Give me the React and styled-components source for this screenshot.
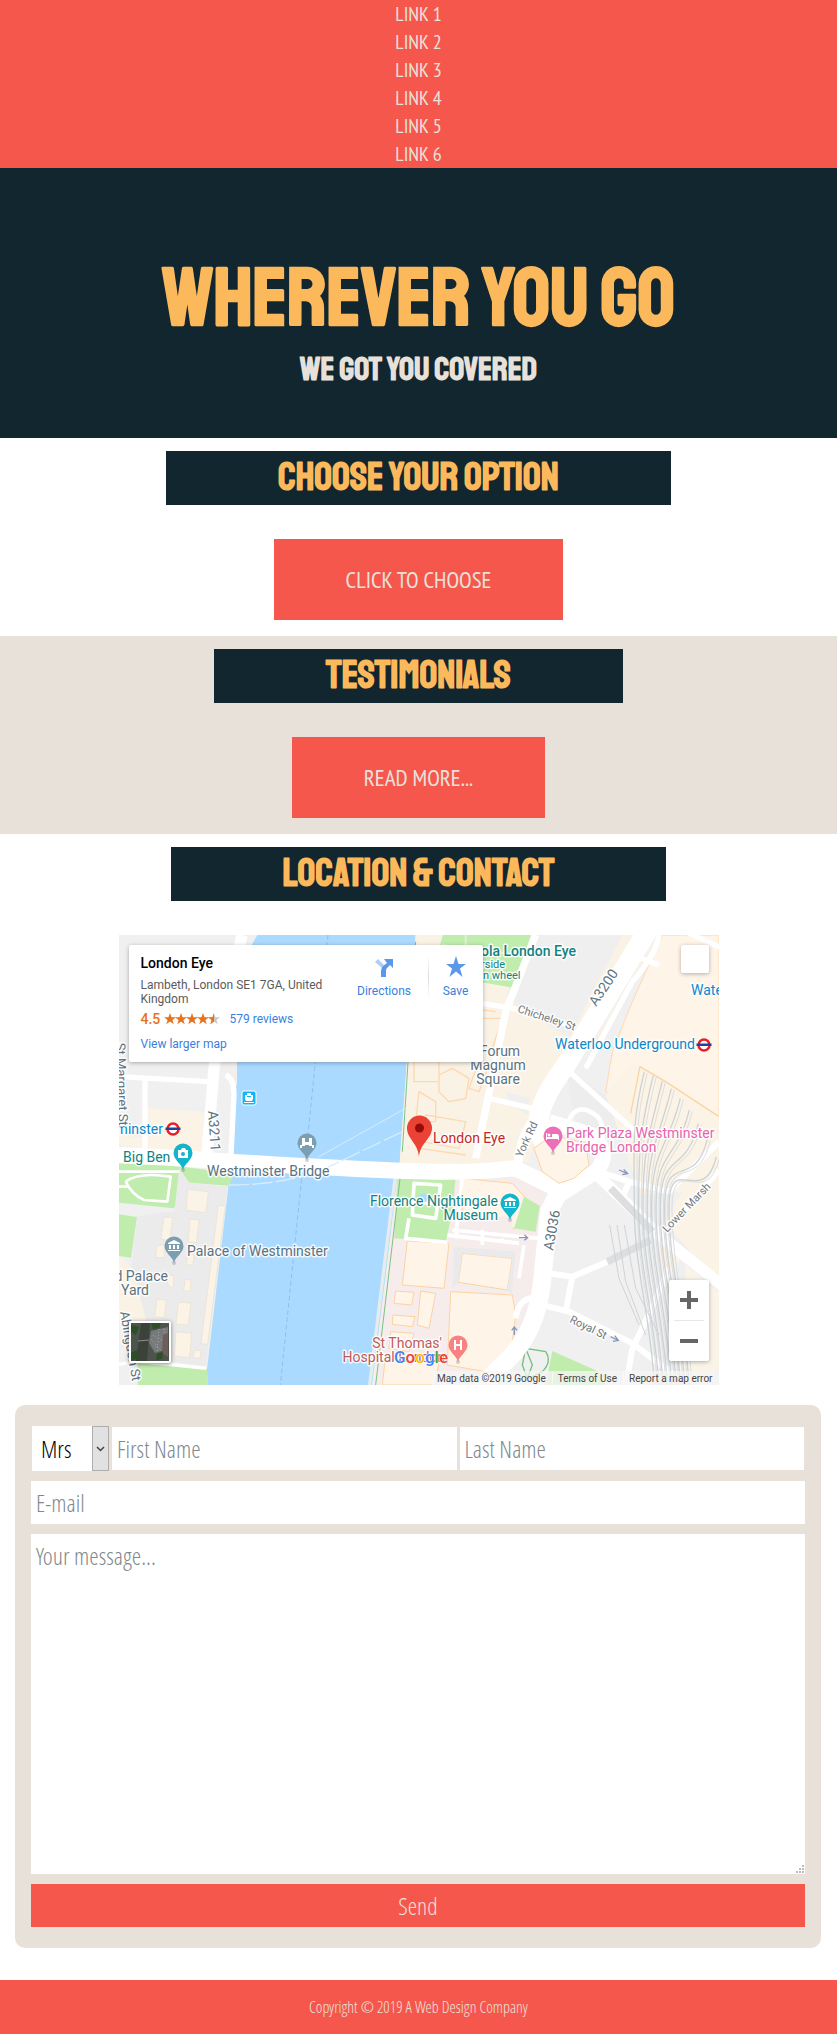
import React from "react";
import styled, { createGlobalStyle } from "styled-components";

const coral = "#f6574d";
const navy = "#122630";
const gold = "#fcb95b";
const sand = "#e8e1da";
const display = 'Staatliches, "Bebas Neue", "Oswald", sans-serif';
const accent = '"Ubuntu Condensed", "PT Sans Narrow", "Open Sans Condensed", sans-serif';
const body = '"Open Sans Condensed Light", "Open Sans Condensed", "Open Sans", sans-serif';
const mapFont = 'Roboto, "Liberation Sans", sans-serif';

const GlobalStyle = createGlobalStyle`
  *, *::before, *::after { box-sizing: border-box; }
  body { margin: 0 1px 0 0; background: #fff; font-family: ${body}; font-weight: 300; }
`;

/* ---------- page ---------- */

const Nav = styled.nav`
  background: ${coral};
`;

const NavList = styled.ul`
  margin: 0;
  padding: 0;
  list-style: none;
  text-align: center;
`;

const NavItem = styled.li`
  font-family: ${accent};
  font-size: 20px;
  font-weight: 400;
  line-height: 28px;
`;

const NavLink = styled.a`
  color: ${sand};
  text-decoration: none;
  text-transform: uppercase;
`;

const Hero = styled.header`
  display: flex;
  flex-direction: column;
  align-items: center;
  padding: 85px 16px 43px;
  background: ${navy};
  font-family: ${display};
  font-weight: 700;
  text-align: center;
`;

const HeroTitle = styled.h1`
  margin: 0;
  color: ${gold};
  font-size: 82px;
  line-height: 92px;
`;

const HeroTagline = styled.h2`
  margin: 0;
  color: ${sand};
  font-size: 33px;
  line-height: 50px;
`;

const Section = styled.section`
  display: flex;
  flex-direction: column;
  align-items: center;
  gap: 34px;
  padding: 13px 0 16px;
  background: ${(p) => (p.$tinted ? sand : "#fff")};
`;

const SectionTitle = styled.h2`
  margin: 0;
  padding: 3px 112px;
  background: ${navy};
  color: ${gold};
  font-family: ${display};
  font-size: 39px;
  font-weight: 700;
  line-height: 48px;
`;

const ActionButton = styled.button`
  padding: 24px 72px;
  border: 0;
  background: ${coral};
  color: ${sand};
  font-family: ${accent};
  font-size: 23px;
  font-weight: 400;
  line-height: 33px;
  text-transform: uppercase;
  cursor: pointer;
`;

const Footer = styled.footer`
  padding: 16px;
  background: ${coral};
  color: ${sand};
  font-size: 16px;
  line-height: 22px;
  text-align: center;
`;

/* ---------- form ---------- */

const ContactForm = styled.form`
  display: flex;
  flex-direction: column;
  gap: 10px;
  margin: 4px 16px 32px 15px;
  padding: 21px 16px;
  border-radius: 10px;
  background: ${sand};
`;

const NameRow = styled.div`
  display: flex;
  align-items: center;
  gap: 3px;
  padding: 0 1px;
`;

const TitlePicker = styled.div`
  position: relative;
  flex: none;
  width: 77px;
`;

const TitleSelect = styled.select`
  appearance: none;
  display: block;
  width: 100%;
  height: 45px;
  padding: 0 9px;
  border: 0;
  border-radius: 0;
  background: #fff;
  color: #000;
  font: 300 24px/33px ${body};
`;

const PickerArrow = styled.span`
  position: absolute;
  inset: 0 0 0 auto;
  display: grid;
  place-items: center;
  width: 17px;
  border: 1px solid #adadad;
  background: #e1e1e1;
  pointer-events: none;
`;

const Field = styled.input`
  flex: 1 1 0;
  min-width: 0;
  width: 100%;
  padding: 5px;
  border: 0;
  border-radius: 0;
  background: #fff;
  color: ${navy};
  font: 300 24px/33px ${body};
  &::placeholder { color: #7f898e; opacity: 1; }
`;

const MessageBox = styled.div`
  position: relative;
  display: flex;
`;

const Message = styled.textarea`
  width: 100%;
  height: 340px;
  padding: 5px;
  border: 0;
  resize: none;
  background: #fff;
  color: ${navy};
  font: 300 24px/33px ${body};
  &::placeholder { color: #7f898e; opacity: 1; }
`;

const Grip = styled.svg`
  position: absolute;
  right: 1px;
  bottom: 1px;
`;

const SendButton = styled.button`
  padding: 5px;
  border: 0;
  background: ${coral};
  color: ${sand};
  font: 300 24px/33px ${body};
  cursor: pointer;
`;

/* ---------- map ---------- */

const MapFrame = styled.div`
  position: relative;
  width: 600px;
  max-width: 100%;
  height: 450px;
  overflow: hidden;
  background: #f0f0f0;
  font-family: ${mapFont};
  font-weight: 400;
`;

const MapCanvas = styled.svg`
  display: block;
`;

const MapLabel = styled.text`
  fill: ${(p) => p.$color || "#5b7280"};
  stroke: #fff;
  stroke-opacity: 0.85;
  stroke-width: 3px;
  stroke-linejoin: round;
  paint-order: stroke;
  font-family: ${mapFont};
  font-size: ${(p) => p.$size || 14}px;
  font-weight: ${(p) => p.$weight || 400};
  text-anchor: ${(p) => p.$anchor || "start"};
`;

const LogoText = styled.text`
  font-family: ${mapFont};
  font-size: 17px;
  font-weight: 500;
  stroke: #fff;
  stroke-width: 1px;
  paint-order: stroke;
`;

const PlaceCard = styled.div`
  position: absolute;
  top: 10px;
  left: 10px;
  display: flex;
  width: 354px;
  height: 117px;
  padding: 10px 0 0 12px;
  border-radius: 2px;
  background: #fff;
  box-shadow: 0 1px 4px rgba(0, 0, 0, 0.3);
`;

const PlaceInfo = styled.div`
  width: 200px;
  color: #5b5b5b;
  font-size: 12px;
  line-height: 14px;
`;

const PlaceName = styled.div`
  margin-bottom: 7px;
  color: #000;
  font-size: 14px;
  font-weight: 500;
  line-height: 16px;
`;

const RatingRow = styled.div`
  display: flex;
  align-items: center;
  height: 16px;
  margin: 5px 0 10px;
`;

const Score = styled.span`
  width: 23px;
  color: #e7711b;
  font-size: 14px;
  font-weight: 500;
`;

const MapLink = styled.a`
  color: #3a7fe0;
  font-size: 12px;
  text-decoration: none;
`;

const ReviewsLink = styled(MapLink)`
  margin-left: 10px;
`;

const CardAction = styled.a`
  display: flex;
  flex-direction: column;
  align-items: center;
  gap: 7px;
  width: ${(p) => p.$width}px;
  height: 44px;
  padding-top: ${(p) => p.$drop || 0}px;
  color: #3a7fe0;
  font-size: 12px;
  line-height: 14px;
  text-decoration: none;
`;

const CardDivider = styled.span`
  width: 1px;
  height: 44px;
  background: linear-gradient(#fff, #dcdcdc, #fff);
`;

const FullscreenButton = styled.button`
  position: absolute;
  top: 10px;
  right: 10px;
  width: 28px;
  height: 28px;
  border: 0;
  border-radius: 2px;
  background: #fff;
  box-shadow: 0 1px 4px rgba(0, 0, 0, 0.3);
`;

const ZoomControl = styled.div`
  position: absolute;
  right: 10px;
  bottom: 24px;
  display: flex;
  flex-direction: column;
  width: 40px;
  padding: 0 5px;
  border-radius: 2px;
  background: #fff;
  box-shadow: 0 1px 4px rgba(0, 0, 0, 0.3);
`;

const ZoomButton = styled.button`
  display: grid;
  place-items: center;
  height: 40px;
  padding: 0;
  border: 0;
  background: none;
  & + & { height: 41px; border-top: 1px solid #e6e6e6; }
`;

const SatelliteButton = styled.button`
  position: absolute;
  left: 10px;
  bottom: 22px;
  width: 42px;
  height: 42px;
  padding: 0;
  border: 2px solid #fff;
  border-radius: 2px;
  background: #3d463e;
  box-shadow: 0 1px 4px rgba(0, 0, 0, 0.5);
`;

const Legal = styled.div`
  position: absolute;
  right: 0;
  bottom: 0;
  display: flex;
  height: 14px;
  background: rgba(245, 245, 245, 0.75);
  color: #444;
  font-size: 10px;
  line-height: 15px;
`;

const LegalItem = styled.span`
  padding: 0 6px 0 5px;
  & + & { border-left: 1px solid rgba(255, 255, 255, 0.6); }
`;

const STAR = "M6 0 7.5 4.2H12L8.4 6.9 9.7 11.2 6 8.6 2.3 11.2 3.6 6.9 0 4.2H4.5Z";

function Stars() {
  return (
    <svg width="56" height="12" viewBox="0 0 56 12" aria-hidden="true">
      <defs>
        <clipPath id="half-star"><rect width="6" height="12" /></clipPath>
      </defs>
      {[0, 11, 22, 33].map((x) => (
        <path key={x} d={STAR} fill="#e7711b" transform={`translate(${x} 0)`} />
      ))}
      <g transform="translate(44 0)">
        <path d={STAR} fill="#c8c8c8" />
        <path d={STAR} fill="#e7711b" clipPath="url(#half-star)" />
      </g>
    </svg>
  );
}

function Pin({ x, y, color, children }) {
  return (
    <g transform={`translate(${x} ${y})`}>
      <path d="M0 16C-1 10-9.500 6-9.500-1A9.500 9.500 0 0 1 9.500-1C9.500 6 1 10 0 16Z" fill={color} />
      <circle cx="0" cy="16" r="2" fill="#555" opacity=".25" />
      <g fill="#fff">{children}</g>
    </g>
  );
}

function Roundel({ x, y }) {
  return (
    <g transform={`translate(${x} ${y})`}>
      <circle r="5.500" fill="#fff" stroke="#e3202b" strokeWidth="2.500" />
      <rect x="-7.500" y="-1.500" width="15" height="2.500" fill="#273f94" />
    </g>
  );
}

const museum = <path d="M0-7-6-4V-3H6V-4ZM-5-2H-3V2H-5ZM-1-2H1V2H-1ZM3-2H5V2H3ZM-6 3H6V4H-6Z" />;

/* rail tracks fanning south from the station */
const tracks = Array.from({ length: 9 }, (_, i) => {
  const top = 1576 + i * 27;
  const y = 410 + i * i * 3 + i * 8;
  const mid = 1546 + i * 13;
  return `M${top} ${y}C${top - 40} ${y + 160} ${mid} 640 ${mid} 820S${mid + 50} 1150 ${mid + 60} 1350`;
}).join("");

function CityMap() {
  return (
    <MapCanvas width="600" height="450" viewBox="0 0 600 450" role="img" aria-label="Map around the London Eye">
      <g transform="scale(.33333)">
        <rect width="1800" height="1350" fill="#f0f0f0" />
        {/* river */}
        <path d="M415 0 398 30 354 381V450L338 458 344 660 330 740 264 1303 266 1350H759L842 680 858 460 890 0Z" fill="#aadaff" />
        <path d="M830 715 752 1350" stroke="#e6eceb" strokeWidth="10" fill="none" />
        {/* east bank blocks */}
        <path d="M890 0H1560L1390 330 1268 520 1230 680 842 690 858 460Z" fill="#faf3e5" />
        <path d="M1215 0H1510L1350 310 1160 190Z" fill="#efefef" />
        <path d="M1160 470 1235 490 1225 540 1170 500Z" fill="#efefef" />
        <path d="M1350 360 1460 470 1540 560V680L1280 600 1250 560Z" fill="#f0f0f0" />
        <path d="M1340 400 1460 480 1520 560 1440 620 1370 570Z" fill="#ededee" />
        <path d="M1560 0H1640L1540 140 1440 330 1380 300Z" fill="#f6f2ea" />
        <path d="M1630 0H1800V620L1540 500 1460 470 1480 350 1540 200Z" fill="#fff4e8" stroke="#fcd9b3" strokeWidth="3" />
        <path d="M1460 480 1540 380 1800 540V1350H1740L1610 900Z" fill="#fbf4e6" />
        <path d="M1535 535 1563 395 1640 440 1800 545" fill="none" stroke="#fcd3a3" strokeWidth="4" />
        <path d="M1690 770 1560 780 1340 765 1290 830 1280 1080 1040 1350H1740L1560 1000Z" fill="#f0f0f1" />
        <path d="M1640 860 1800 1060V1350H1660L1590 1110Z" fill="#efeff0" />
        <path d="M1600 860 1640 900 1690 960 1640 1060Z" fill="#fbf4e6" />
        <path d="M1700 990 1800 1070V1300L1760 1350H1680Z" fill="#faf4e8" />
        {/* south bank hospital */}
        <path d="M836 710H1260L1290 830 1250 1110 1080 1350H765Z" fill="#f5eceb" />
        <g fill="#fff4e8" stroke="#fcd3a3" strokeWidth="3">
          <path d="M865 918 990 925 975 1060 850 1050ZM1030 955 1180 970 1165 1065 1018 1042ZM995 1070 1180 1080 1190 1140 1180 1220 1100 1310 985 1290ZM830 1068 885 1072 878 1110 825 1105ZM822 1140 888 1145 880 1175 820 1168ZM815 1190 885 1195 870 1250 810 1240ZM800 1260 960 1275 950 1350H790ZM905 1068 950 1075 930 1180 895 1170Z" />
          <path d="M1030 730 1180 745 1230 800 1190 880 1030 865Z" />
          <path d="M985 845H1180V882L985 870Z" fill="#f5eceb" stroke="none" />
          <path d="M985 900 1200 925" stroke="#fff" strokeWidth="12" />
        </g>
        <path d="M1005 935 1190 950 1178 1080 1165 1065 1180 970 1030 955 1018 1042 1000 1060Z" fill="#eaeaec" />
        {/* buildings north of the wheel */}
        <g fill="none" stroke="#fdd8b0" strokeWidth="4">
          <path d="M885 380H960V440H885ZM900 470 950 500V560H890ZM1060 250 1150 250 1120 340 1060 330ZM1075 390 1110 390 1080 470 1050 460ZM960 420 1000 400 1050 430 1040 490 990 500 960 470ZM920 540 1040 560 1020 640 910 620Z" />
          <path d="M1060 220 1130 230M900 640 1040 660" />
        </g>
        {/* parks */}
        <g fill="#c0ecae">
          <path d="M971 0H1236L1181 158 1080 140 940 120Z" />
          <path d="M0 672 346 715 330 752 211 743 165 820 0 803Z" />
          <path d="M0 838 54 846 36 968 0 963ZM56 1285 264 1303 266 1350H56Z" />
          <path d="M836 715 1010 727 1000 830 980 920 826 910ZM1215 785 1262 812 1250 890 1185 880ZM1300 1248 1440 1310 1460 1350H1280Z" />
        </g>
        <path d="M1040 0V130M970 30 1200 60" stroke="#dff3d3" strokeWidth="6" />
        <path d="M845 715 770 1350M890 20 850 650" stroke="#7dc184" strokeWidth="3" fill="none" />
        <path d="M1220 1240 1280 1250Q1300 1280 1270 1310L1230 1330M1220 1240 1240 1290 1225 1330 1210 1290Z" stroke="#72c27d" strokeWidth="4" fill="none" />
        {/* Westminster palace */}
        <path d="M181 698 211 743 326 755 261 1293 80 1270 76 1150 36 1000 56 843 166 828Z" fill="#ebebeb" />
        <path d="M0 965 40 1000 80 1150 60 1200 0 1160Z" fill="#faf3e5" />
        <path d="M80 520 255 530 250 660 0 630V600L80 610Z" fill="#fbf4e6" />
        <g transform="translate(-24 678)" fill="#fbf4e6" stroke="#e8dfd0" strokeWidth="2">
          <path d="M230 85 292 92 285 155 225 148ZM158 168 185 170 176 238 150 235ZM237 175 264 177 256 245 231 242ZM138 255 160 250V290L134 290ZM230 280H250L245 312H226ZM170 342 188 345 186 383 170 370ZM222 355 240 358 237 391 218 389ZM138 415 166 417 160 470 131 467ZM202 424 240 426 232 492 195 490ZM195 513 242 516 236 590 190 585ZM250 567 270 570 267 592 247 590ZM322 133 343 135 290 550 270 548Z" />
          <path d="M24 610 80 600 285 622" fill="none" stroke="#fff" strokeWidth="10" />
        </g>
        {/* roads */}
        <g fill="none" stroke="#fff" strokeLinejoin="round">
          <path d="M-10 660C200 668 500 695 860 708S1150 680 1220 715L1330 770" strokeWidth="48" />
          <path d="M1590-20 1335 400Q1245 520 1262 590T1340 640" strokeWidth="60" />
          <path d="M1290 560 1420 600Q1480 660 1430 710L1320 780" strokeWidth="46" />
          <path d="M1330 750 1290 830 1268 1050Q1250 1190 1170 1270L1080 1360" strokeWidth="54" />
          <path d="M1240 560Q1200 620 1195 700" strokeWidth="28" />
          <path d="M1250 0 1160 230 1070 670" strokeWidth="22" />
          <path d="M370 0Q310 200 285 400L262 680" strokeWidth="34" />
          <path d="M0 425 270 440M78 430V640M320 420Q345 430 345 480L335 680" strokeWidth="16" />
          <path d="M1090 205 1180 220 1350 270M1110 490 1240 520M1340 400 1560 600M1620 0Q1610 60 1540 140L1400 400M1540 60 1620 90M1700-10 1810 40" strokeWidth="16" />
          <path d="M1340 590Q1360 490 1430 540 1460 560 1445 640" strokeWidth="14" />
          <path d="M20 740Q60 710 155 725L145 800 75 795Q40 780 20 740M0 755H25M0 710H180" strokeWidth="8" />
          <path d="M885 745 965 750 950 850 880 840ZM870 850 860 910 985 922M1030 725 1010 910M890 800 950 805M1000 885 1260 910M1090 885V930M1150 910V920M1215 930 1200 1030" strokeWidth="11" />
          <path d="M1290 1015 1360 1025 1340 1130M1360 1025 1465 980M1270 1110 1350 1130 1540 1225 1680 1330M1540 1240 1520 1360M1190 1150Q1200 1080 1260 1090" strokeWidth="18" />
          <path d="M1440 710 1530 740 1510 790M1530 740 1650 770 1800 620M1650 1000 1580 1160 1540 1240M1800 705 1640 890" strokeWidth="18" />
          <path d="M1440 725 1620 900 1820 1060" strokeWidth="34" />
        </g>
        <path d="M1475 760 1600 890M1465 980 1595 915" stroke="#dddedf" strokeWidth="22" fill="none" />
        <path d={tracks} fill="none" stroke="#c9ced2" strokeWidth="4" opacity=".9" />
        <path d={tracks} transform="translate(9 4)" fill="none" stroke="#dadde0" strokeWidth="3" />
        <path d="M1472 870 1500 1030 1560 1170M1494 870 1520 1040 1580 1200M1516 870 1550 1060 1620 1200" fill="none" stroke="#cfd3d6" strokeWidth="3" />
        {/* park plaza block */}
        <path d="M1245 640 1300 600 1400 625 1410 690 1365 730 1320 745 1270 710Z" fill="#fff4e8" stroke="#fcd3a3" strokeWidth="3" />
        {/* ferry lines and footpaths */}
        <path d="M627 0 560 670M550 710 484 1350" stroke="#8fbff0" strokeWidth="3" strokeDasharray="14 8" fill="none" />
        <path d="M330 750Q500 750 620 700L850 590" stroke="#d6ecfb" strokeWidth="4" strokeDasharray="60 10" fill="none" />
        <path d="M600 665 860 520" stroke="#d6ecfb" strokeWidth="3" fill="none" />
        <circle cx="912" cy="790" r="14" fill="#aadaff" />
        <g fill="none" stroke="#8a97b8" strokeWidth="4">
          <path d="M1200 908H1225M1216 900 1226 908 1216 916M1500 705 1524 715M1514 703 1526 716 1510 719M1475 1205 1495 1215M1487 1202 1498 1216 1482 1219M1186 1200V1178M1178 1186 1186 1176 1194 1186" />
        </g>
      </g>

      <g>
        <MapLabel x="362" y="21" $color="#12827f" $weight="500">ola London Eye</MapLabel>
        <MapLabel x="362" y="33" $color="#12827f" $size={11}>rside</MapLabel>
        <MapLabel x="364" y="44" $color="#12827f" $size={11}>n wheel</MapLabel>
        <MapLabel transform="translate(477 72) rotate(-56)">A3200</MapLabel>
        <MapLabel transform="translate(398 77) rotate(18)" $size={11} $color="#6f777c">Chicheley St</MapLabel>
        <MapLabel x="572" y="60" $color="#0a87c9">Waterloo</MapLabel>
        <MapLabel x="436" y="114" $color="#0a87c9">Waterloo Underground</MapLabel>
        <MapLabel x="381" y="121" $anchor="middle">Forum</MapLabel>
        <MapLabel x="379" y="135" $anchor="middle">Magnum</MapLabel>
        <MapLabel x="379" y="149" $anchor="middle">Square</MapLabel>
        <MapLabel transform="translate(403 223) rotate(-65)" $size={11} $color="#6f777c">York Rd</MapLabel>
        <MapLabel x="314" y="208" $color="#c02a22">London Eye</MapLabel>
        <MapLabel x="447" y="203" $color="#ea62ad">Park Plaza Westminster</MapLabel>
        <MapLabel x="447" y="217" $color="#ea62ad">Bridge London</MapLabel>
        <MapLabel x="44" y="199" $anchor="end" $color="#0a87c9">Westminster</MapLabel>
        <MapLabel x="4" y="227" $color="#12827f">Big Ben</MapLabel>
        <MapLabel transform="translate(89 176) rotate(86)">A3211</MapLabel>
        <MapLabel transform="translate(-3 108) rotate(88)" $size={13}>St Margaret St</MapLabel>
        <MapLabel x="88" y="241">Westminster Bridge</MapLabel>
        <MapLabel x="68" y="321">Palace of Westminster</MapLabel>
        <MapLabel x="49" y="346" $anchor="end">Old Palace</MapLabel>
        <MapLabel x="16" y="360" $anchor="middle">Yard</MapLabel>
        <MapLabel transform="translate(1 377) rotate(80)" $size={13}>Abingdon St</MapLabel>
        <MapLabel x="379" y="271" $anchor="end" $color="#12827f">Florence Nightingale</MapLabel>
        <MapLabel x="379" y="285" $anchor="end" $color="#12827f">Museum</MapLabel>
        <MapLabel transform="translate(434 316) rotate(-80)">A3036</MapLabel>
        <MapLabel transform="translate(548 298) rotate(-46)" $size={11} $color="#6f777c">Lower Marsh</MapLabel>
        <MapLabel transform="translate(450 387) rotate(26)" $size={11} $color="#6f777c">Royal St</MapLabel>
        <MapLabel x="323" y="413" $anchor="end" $color="#bf5a5a">St Thomas&apos;</MapLabel>
        <MapLabel x="326" y="427" $anchor="end" $color="#bf5a5a">Hospital London</MapLabel>
      </g>

      <Roundel x={54} y={194} />
      <Roundel x={585} y={110} />
      <g transform="translate(130 163)">
        <rect x="-7" y="-7" width="14" height="14" rx="2" fill="#12b5f5" stroke="#fff" />
        <path d="M-4-3H-2V-5H2V-3H4V1L3 3H-3L-4 1ZM-5 4H5V5H-5Z" fill="#fff" />
        <path d="M-2-2H2V-1H-2Z" fill="#12b5f5" />
      </g>
      <Pin x={64} y={219} color="#12b5cb"><path d="M-5-4H-2L-1-6H2L3-4H5V4H-5Z" /><circle r="2" fill="#12b5cb" /></Pin>
      <Pin x={188} y={209} color="#7b9eb0"><path d="M-7 4V1H-5V-6H-2V-2H2V-6H5V1H7V4H5V2H2V1H-2V2H-5V4Z" /></Pin>
      <Pin x={55} y={312} color="#7b9eb0">{museum}</Pin>
      <Pin x={391} y={269} color="#12b5cb">{museum}</Pin>
      <Pin x={434} y={202} color="#ec6fb8"><path d="M-7-4H-6V0H-1V-3H4Q6-3 6 0V3H5V2H-6V3H-7Z" /><circle cx="-4" cy="-2" r="1.500" /></Pin>
      <Pin x={339} y={411} color="#f88181"><path d="M-4-6H-2V-2H2V-6H4V4H2V0H-2V4H-4Z" /></Pin>
      <path d="M300 222C299 208 288 204 288 193A12.500 12.500 0 0 1 313 193C313 204 301 208 300 222Z" fill="#ea4335" />
      <circle cx="300.500" cy="193" r="4.500" fill="#960a0a" />
      <LogoText x="275" y="428">
        <tspan fill="#4285f4">G</tspan><tspan fill="#ea4335">o</tspan><tspan fill="#fbbc05">o</tspan><tspan fill="#4285f4">g</tspan><tspan fill="#34a853">l</tspan><tspan fill="#ea4335">e</tspan>
      </LogoText>
    </MapCanvas>
  );
}

function LocationMap() {
  return (
    <MapFrame>
      <CityMap />
      <PlaceCard>
        <PlaceInfo>
          <PlaceName>London Eye</PlaceName>
          Lambeth, London SE1 7GA, United Kingdom
          <RatingRow>
            <Score>4.5</Score>
            <Stars />
            <ReviewsLink href="#reviews">579 reviews</ReviewsLink>
          </RatingRow>
          <MapLink href="#map">View larger map</MapLink>
        </PlaceInfo>
        <CardAction href="#directions" $width={87} $drop={4}>
          <svg width="18" height="18" viewBox="0 0 18 18" aria-hidden="true">
            <path d="M0 3 3 0 9 6 7 9Z" fill="#b1cdf3" />
            <path d="M6 18V12Q6 9 8 7L12 4 9 0H18V9L15 6 12 9Q11 10 11 12V18Z" fill="#5b97e8" />
          </svg>
          Directions
        </CardAction>
        <CardDivider />
        <CardAction href="#save" $width={54} $drop={1}>
          <svg width="20" height="21" viewBox="0 0 20 21" aria-hidden="true">
            <path d="M10 0 12.500 8H20L14 12.500 16.500 21 10 15.500 3.500 21 6 12.500 0 8H7.500Z" fill="#5b97e8" />
          </svg>
          Save
        </CardAction>
      </PlaceCard>
      <FullscreenButton type="button" aria-label="Toggle fullscreen" />
      <ZoomControl>
        <ZoomButton type="button" aria-label="Zoom in">
          <svg width="18" height="18" aria-hidden="true"><path d="M7 0H11V7H18V11H11V18H7V11H0V7H7Z" fill="#666" /></svg>
        </ZoomButton>
        <ZoomButton type="button" aria-label="Zoom out">
          <svg width="18" height="4" aria-hidden="true"><rect width="18" height="4" fill="#666" /></svg>
        </ZoomButton>
      </ZoomControl>
      <SatelliteButton type="button" aria-label="Show satellite imagery">
        <svg width="38" height="38" aria-hidden="true">
          <rect width="38" height="38" fill="#4d544c" />
          <path d="M10 0H19L16 38H5Z" fill="#3a4239" />
          <path d="M20 8 37 4V26L24 30 18 20Z" fill="#77797a" />
          <path d="M22 12 36 20M24 24 36 10M20 16 30 28M28 6 26 30M33 6 35 30" stroke="#a2a3a6" strokeDasharray="1 2" fill="none" />
          <path d="M32 12 37 10V34L31 30Z" fill="#6f5e58" />
          <path d="M20 0H30L28 5 22 6ZM26 31 32 29 31 36 25 37ZM0 2 8 4 5 12 0 9ZM0 30 6 27V36L0 38Z" fill="#2c4f27" />
          <path d="M7 18 18 17" stroke="#8b8f88" />
        </svg>
      </SatelliteButton>
      <Legal>
        <LegalItem>Map data ©2019 Google</LegalItem>
        <LegalItem>Terms of Use</LegalItem>
        <LegalItem>Report a map error</LegalItem>
      </Legal>
    </MapFrame>
  );
}

export default function App() {
  return (
    <>
      <GlobalStyle />
      <Nav>
        <NavList>
          {[1, 2, 3, 4, 5, 6].map((n) => (
            <NavItem key={n}><NavLink href={`#link-${n}`}>Link {n}</NavLink></NavItem>
          ))}
        </NavList>
      </Nav>
      <Hero>
        <HeroTitle>WHEREVER YOU GO</HeroTitle>
        <HeroTagline>WE GOT YOU COVERED</HeroTagline>
      </Hero>
      <main>
        <Section>
          <SectionTitle>CHOOSE YOUR OPTION</SectionTitle>
          <ActionButton type="button">Click to choose</ActionButton>
        </Section>
        <Section $tinted>
          <SectionTitle>TESTIMONIALS</SectionTitle>
          <ActionButton type="button">Read more...</ActionButton>
        </Section>
        <Section>
          <SectionTitle>LOCATION &amp; CONTACT</SectionTitle>
          <LocationMap />
        </Section>
        <ContactForm>
          <NameRow>
            <TitlePicker>
              <TitleSelect aria-label="Title" defaultValue="Mrs">
                <option>Mrs</option>
                <option>Ms</option>
                <option>Mr</option>
              </TitleSelect>
              <PickerArrow>
                <svg width="9" height="6" aria-hidden="true"><path d="M1 1 4.500 4.500 8 1" fill="none" stroke="#444" strokeWidth="1.500" /></svg>
              </PickerArrow>
            </TitlePicker>
            <Field aria-label="First name" placeholder="First Name" />
            <Field aria-label="Last name" placeholder="Last Name" />
          </NameRow>
          <Field type="email" aria-label="E-mail" placeholder="E-mail" />
          <MessageBox>
            <Message aria-label="Your message" placeholder="Your message..." />
            <Grip width="8" height="8" aria-hidden="true">
              <path d="M6 0H8V2H6ZM3 3H5V5H3ZM6 3H8V5H6ZM0 6H2V8H0ZM3 6H5V8H3ZM6 6H8V8H6Z" fill="#bbb" />
            </Grip>
          </MessageBox>
          <SendButton type="submit">Send</SendButton>
        </ContactForm>
      </main>
      <Footer>Copyright © 2019 A Web Design Company</Footer>
    </>
  );
}
